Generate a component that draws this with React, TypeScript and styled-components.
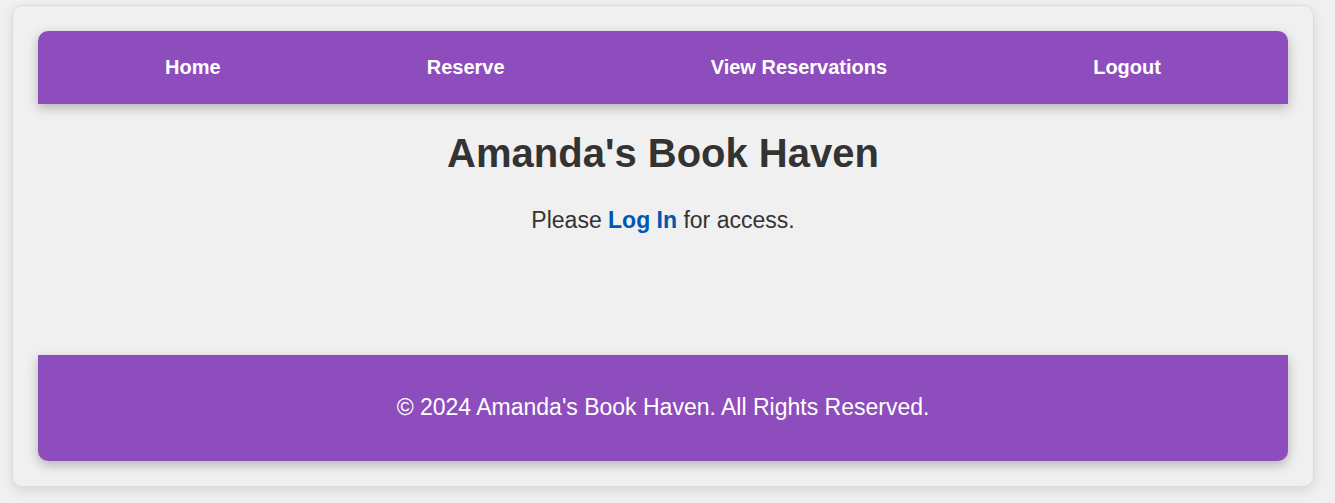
import React from "react";
import styled, { createGlobalStyle } from "styled-components";

const GlobalStyle = createGlobalStyle`
  * { box-sizing: border-box; }
  body {
    margin: 0;
    padding: 5px 21px 16px 12px;
    background: #f0f0f0;
    color: #333;
    font-family: Arial, "Liberation Sans", sans-serif;
    font-size: 23px;
    line-height: 36px;
  }
`;

const Container = styled.div`
  padding: 25px;
  border: 1px solid #ddd;
  border-radius: 10px;
  background: #f0f0f0;
  box-shadow: 0 4px 12px rgba(0, 0, 0, 0.1);
`;

const NavBar = styled.nav`
  padding: 18px 24px 19px;
  border-radius: 10px 10px 0 0;
  background: #8e4dbd;
  box-shadow: 0 4px 12px rgba(0, 0, 0, 0.25);
`;

const NavList = styled.ul`
  display: flex;
  justify-content: space-around;
  margin: 0;
  padding: 0;
  font-size: 20px;
  list-style: none;
`;

const NavLink = styled.a`
  color: #fff;
  font-weight: bold;
  text-decoration: none;
`;

const Main = styled.main`
  min-height: 251px;
  padding-top: 18px;
  text-align: center;
`;

const Title = styled.h1`
  margin: 0;
  font-size: 40px;
  line-height: 62px;
`;

const Message = styled.p`
  margin: 18px 0 0;
`;

const LoginLink = styled.a`
  color: #0056b3;
  font-weight: bold;
  text-decoration: none;
`;

const Footer = styled.footer`
  padding: 34px 24px 36px;
  border-radius: 0 0 10px 10px;
  background: #8e4dbd;
  box-shadow: 0 4px 12px rgba(0, 0, 0, 0.25);
  color: #fff;
  text-align: center;
`;

const Copyright = styled.p`
  margin: 0;
`;

const links = ["Home", "Reserve", "View Reservations", "Logout"];

export default function App() {
  return (
    <>
      <GlobalStyle />
      <Container>
        <NavBar>
          <NavList>
            {links.map((label) => (
              <li key={label}>
                <NavLink href="#">{label}</NavLink>
              </li>
            ))}
          </NavList>
        </NavBar>
        <Main>
          <Title>Amanda's Book Haven</Title>
          <Message>
            Please <LoginLink href="#">Log In</LoginLink> for access.
          </Message>
        </Main>
        <Footer>
          <Copyright>© 2024 Amanda's Book Haven. All Rights Reserved.</Copyright>
        </Footer>
      </Container>
    </>
  );
}
